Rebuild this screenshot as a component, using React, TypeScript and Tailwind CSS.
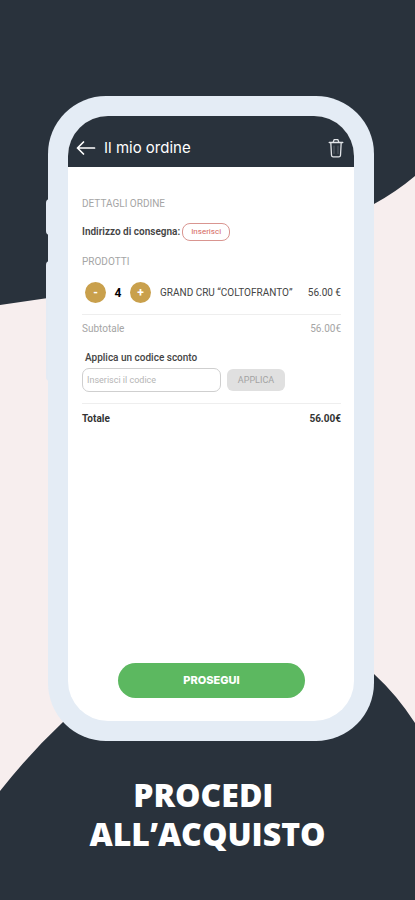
import { useState } from "react";

const UNIT_PRICE = 14;

function euro(value: number) {
  return value.toFixed(2);
}

function Backdrop() {
  return (
    <svg
      className="absolute inset-0 h-full w-full"
      viewBox="0 0 415 900"
      preserveAspectRatio="none"
      aria-hidden="true"
    >
      <rect width="415" height="900" fill="#f7eeee" />
      <path d="M0 0H415V176Q396 192 374 204Q220 275 48 298L0 305Z" fill="#29323c" />
      <path d="M0 791Q30 753 62 723C150 640 285 605 374 674Q397 695 415 723V900H0Z" fill="#29323c" />
    </svg>
  );
}

function BackIcon() {
  return (
    <svg width="20" height="16" viewBox="0 0 20 16" fill="none" stroke="currentColor" strokeWidth="1.7" strokeLinecap="round" strokeLinejoin="round" aria-hidden="true">
      <path d="M18.5 8H1.5M7.5 2L1.5 8L7.5 14" />
    </svg>
  );
}

function TrashIcon() {
  return (
    <svg width="16" height="20" viewBox="0 0 16 20" fill="none" stroke="currentColor" strokeWidth="1.3" strokeLinecap="round" strokeLinejoin="round" aria-hidden="true">
      <path d="M1.2 4.5H14.8M5 4.5L6.2 1.6H9.8L11 4.5M2.8 4.5L3.5 17.2Q3.6 18.8 5.2 18.8H10.8Q12.4 18.8 12.5 17.2L13.2 4.5" />
      <path d="M6 8V15.5M10 8V15.5" strokeWidth="0.6" opacity="0.45" />
    </svg>
  );
}

export default function App() {
  const [quantity, setQuantity] = useState(4);
  const total = euro(quantity * UNIT_PRICE);
  const round =
    "flex size-[21px] items-center justify-center rounded-full bg-[#c9a04c] text-[12px] leading-none font-bold text-white";

  return (
    <div className="relative flex min-h-screen flex-col pt-24 font-['Roboto',sans-serif]">
      <Backdrop />

      <div className="relative mr-[41px] ml-12 flex flex-1 flex-col">
        <span className="absolute top-[103px] -left-[2px] h-9 w-2 rounded-l-sm bg-[#e4ebf4]" />
        <span className="absolute top-[165px] -left-[2px] h-[120px] w-2 rounded-l-sm bg-[#e4ebf4]" />

        <div className="relative flex flex-1 flex-col rounded-[58px] bg-[#e4ecf5] p-5">
          <div className="flex flex-1 flex-col overflow-hidden rounded-[40px] bg-white">
            <header className="flex h-[51px] items-center bg-[#29323c] pt-3 pr-[10px] pl-2 text-white">
              <button type="button" aria-label="Indietro">
                <BackIcon />
              </button>
              <h1 className="flex-1 pl-2 font-['Inter',sans-serif] text-[15px] leading-5">Il mio ordine</h1>
              <button type="button" aria-label="Svuota ordine" className="text-[#e1e4e8]">
                <TrashIcon />
              </button>
            </header>

            <main className="flex flex-1 flex-col pt-[30px] pr-[13px] pb-[23px] pl-[14px]">
              <h2 className="text-[10px] leading-[14px] text-[#a5a5a5]">DETTAGLI ORDINE</h2>
              <div className="mt-3 flex items-center gap-[2px]">
                <span className="text-[10px] leading-[14px] font-semibold text-[#444]">Indirizzo di consegna:</span>
                <button
                  type="button"
                  className="h-[18px] w-12 rounded-[8px] border border-[#d99590] text-[8px] leading-none text-[#d4655e]"
                >
                  Inserisci
                </button>
              </div>

              <h2 className="mt-[14px] text-[10px] leading-[14px] text-[#a5a5a5]">PRODOTTI</h2>
              <div className="mt-[13px] flex items-center border-b border-[#eeeeee] pb-[11px] pl-[3px] text-[10px] text-[#444]">
                <button
                  type="button"
                  aria-label="Diminuisci quantità"
                  className={round}
                  onClick={() => setQuantity((q) => Math.max(1, q - 1))}
                >
                  -
                </button>
                <span className="w-6 text-center text-[12px] font-bold text-black">{quantity}</span>
                <button
                  type="button"
                  aria-label="Aumenta quantità"
                  className={round}
                  onClick={() => setQuantity((q) => q + 1)}
                >
                  +
                </button>
                <span className="flex-1 pl-[9px] whitespace-nowrap">GRAND CRU “COLTOFRANTO”</span>
                <span className="whitespace-nowrap">{total} €</span>
              </div>

              <div className="mt-[7px] flex justify-between text-[10px] leading-[14px] text-[#a5a5a5]">
                <span>Subtotale</span>
                <span>{total}€</span>
              </div>

              <form className="mt-[15px] border-b border-[#eeeeee] pb-[11px]" onSubmit={(e) => e.preventDefault()}>
                <label htmlFor="codice" className="block pl-[3px] text-[10px] leading-[14px] font-medium text-[#444]">
                  Applica un codice sconto
                </label>
                <div className="mt-[3px] flex items-center gap-[6px]">
                  <input
                    id="codice"
                    type="text"
                    placeholder="Inserisci il codice"
                    className="h-6 w-[139px] rounded-[7px] border border-[#cfcfcf] bg-white px-1 text-[9px] text-[#444] outline-none placeholder:text-[#b5b5b5]"
                  />
                  <button
                    type="submit"
                    className="h-[22px] w-[58px] rounded-[6px] bg-[#e0e0e0] text-[9px] leading-none text-[#a3a3a3]"
                  >
                    APPLICA
                  </button>
                </div>
              </form>

              <div className="mt-[8px] flex justify-between text-[10px] leading-[14px] font-bold text-[#333]">
                <span>Totale</span>
                <span>{total}€</span>
              </div>

              <button
                type="button"
                className="mx-9 mt-auto h-[35px] rounded-full bg-[#5cb860] font-['Inter',sans-serif] text-[11px] font-extrabold text-white"
              >
                PROSEGUI
              </button>
            </main>
          </div>
        </div>
      </div>

      <p className="relative pt-[34px] pb-[47px] text-center font-['Open_Sans',sans-serif] text-[32px] leading-[39px] font-extrabold text-white">
        PROCEDI&nbsp;
        <br />
        ALL’ACQUISTO
      </p>
    </div>
  );
}
